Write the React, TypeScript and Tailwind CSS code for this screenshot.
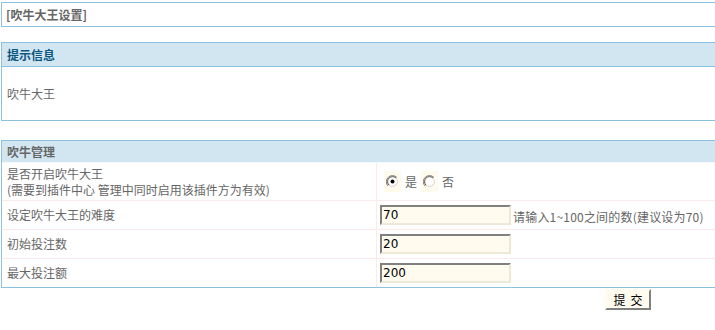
import React from 'react';

const font = { fontFamily: '"Noto Sans CJK SC", "Liberation Sans", sans-serif' };

function Radio({ checked }: { checked?: boolean }) {
  return (
    <span className="flex h-[21px] w-[17px] items-center justify-center bg-[#fffbec]">
      <svg width="13" height="13" viewBox="0 0 13 13">
        <path d="M11 2.5A6 6 0 0 0 2 11" fill="none" stroke="#808080" strokeWidth="1" />
        <path d="M10 3.2A4.8 4.8 0 0 0 3 10" fill="none" stroke="#404040" strokeWidth="1" />
        <path d="M2 11A6 6 0 0 0 11 2.5" fill="none" stroke="#ffffff" strokeWidth="1" />
        <path d="M3 10A4.8 4.8 0 0 0 10 3.2" fill="none" stroke="#d4d0c8" strokeWidth="1" />
        <circle cx="6.5" cy="6.5" r="4" fill="#ffffff" />
        {checked && <circle cx="6.5" cy="6.5" r="2" fill="#000000" />}
      </svg>
    </span>
  );
}

function TextBox({ value }: { value: string }) {
  return (
    <div className="flex h-[20px] w-[131px] items-center border-2 border-t-[#808080] border-l-[#808080] border-r-[#ece9d8] border-b-[#ece9d8] bg-[#fffcef] pl-[1px] text-[12px] text-black" style={{ fontFamily: '"DejaVu Sans", sans-serif' }}>
      {value}
    </div>
  );
}

function Row({ label, children, tall }: { label: React.ReactNode; children: React.ReactNode; tall?: boolean }) {
  return (
    <div className="grid grid-cols-[375px_1fr] border-b border-[#fbeaea] last:border-b-0">
      <div className={`border-r border-[#fbeaea] pl-[5px] ${tall ? 'pt-[3px] pb-[2px] leading-[16px]' : 'flex h-[28px] items-center'}`}>{label}</div>
      <div className="flex items-center pl-[3px]">{children}</div>
    </div>
  );
}

export default function App() {
  return (
    <div className="h-[330px] w-[715px] overflow-hidden bg-white text-[12px] text-[#666666]" style={font}>
      <div className="ml-[1px] w-[760px] pt-[2px]">
        <div className="flex h-[25px] items-center border border-[#8dc1df] pl-[4px] font-bold">[吹牛大王设置]</div>

        <div className="mt-[15px] border border-[#8dc1df]">
          <div className="flex h-[24px] items-center border-b border-[#8dc1df] bg-[#d2e6f2] pl-[5px] font-bold text-[#0b5680]">提示信息</div>
          <div className="flex h-[53px] items-center pl-[5px]">吹牛大王</div>
        </div>

        <div className="mt-[19px] border border-[#8dc1df]">
          <div className="flex h-[22px] items-center border-b border-[#f4f8fb] bg-[#d2e6f2] pl-[5px] font-bold">吹牛管理</div>
          <Row tall label={<>是否开启吹牛大王<br />(需要到插件中心 管理中同时启用该插件方为有效)</>}>
            <div className="ml-[4px] flex items-center">
              <Radio checked />
              <span className="ml-[4px] mr-[4px]">是</span>
              <Radio />
              <span className="ml-[4px]">否</span>
            </div>
          </Row>
          <Row label="设定吹牛大王的难度">
            <TextBox value="70" />
            <span className="ml-[2px] mt-[4px] tracking-[0.2px]">请输入1~100之间的数(建议设为70)</span>
          </Row>
          <Row label="初始投注数">
            <TextBox value="20" />
          </Row>
          <Row label="最大投注额">
            <TextBox value="200" />
          </Row>
        </div>

        <div className="ml-[604px] mt-[1px]">
          <button className="flex h-[21px] w-[46px] items-center justify-center gap-[5px] border-2 border-t-[#fffcef] border-l-[#fffcef] border-r-[#808080] border-b-[#808080] bg-[#fffcef] text-[12px] text-black">
            <span>提</span>
            <span>交</span>
          </button>
        </div>
      </div>
    </div>
  );
}
